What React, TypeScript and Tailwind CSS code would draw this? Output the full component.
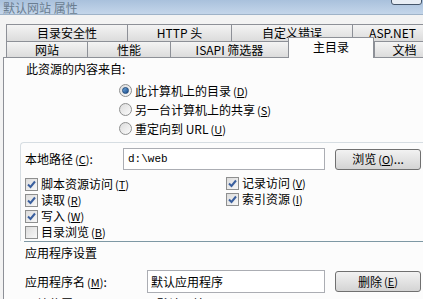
import React from "react";

function Key({ k }: { k: string }) {
  return (
    <span className="ml-[2px] text-[11px]">
      (<span className="underline">{k}</span>)
    </span>
  );
}

function Tab({ label, w }: { label: React.ReactNode; w: string }) {
  return (
    <div
      className={`${w} h-full shrink-0 flex items-center justify-center border-t border-l border-[#8d9097] bg-gradient-to-b from-[#f4f4f4] to-[#dcdcdc] text-[12px] leading-none`}
    >
      {label}
    </div>
  );
}

function Radio({ on, children }: { on?: boolean; children: React.ReactNode }) {
  return (
    <div className="h-[19px] flex items-center gap-[3px]">
      <div className="w-[13px] h-[13px] rounded-full border border-[#8e8f8f] bg-gradient-to-br from-[#dcdcdc] to-[#fbfbfb] flex items-center justify-center">
        {on && (
          <div className="w-[7px] h-[7px] rounded-full bg-gradient-to-br from-[#6fa8dc] to-[#1c4d8c] border border-[#1f4a7c]" />
        )}
      </div>
      <span className="text-[12px] leading-none">{children}</span>
    </div>
  );
}

function Check({ on, children }: { on?: boolean; children: React.ReactNode }) {
  return (
    <div className="h-[16px] flex items-center gap-[3px]">
      <div className="w-[13px] h-[13px] border border-[#8e8f8f] bg-gradient-to-br from-[#dcdcdc] to-[#f8f8f8] flex items-center justify-center">
        {on && (
          <svg width="9" height="9" viewBox="0 0 9 9">
            <path d="M1 4.5 L3.5 7 L8 1.5" fill="none" stroke="#3a5f9e" strokeWidth="2" />
          </svg>
        )}
      </div>
      <span className="text-[12px] leading-none">{children}</span>
    </div>
  );
}

function Btn({ children }: { children: React.ReactNode }) {
  return (
    <div className="w-[86px] h-[21px] shrink-0 rounded-[3px] border border-[#707070] bg-gradient-to-b from-[#f2f2f2] to-[#d4d4d4] flex items-center justify-center text-[12px] leading-none">
      {children}
    </div>
  );
}

export default function App() {
  return (
    <div className="relative w-[423px] h-[299px] overflow-hidden bg-[#f3f3f3] text-black font-['Noto_Sans_CJK_SC','Noto_Sans',sans-serif]">
      {/* title bar */}
      <div className="h-[15px] bg-gradient-to-b from-[#a9c1dc] to-[#c4d6ea] border-b border-[#9fb3c8] flex items-center pl-[3px]">
        <span className="text-[12px] leading-[13px] text-[#6a7d90]">默认网站 属性</span>
      </div>
      <div className="absolute left-[391px] top-[-5px] w-[31px] h-[10px] rounded-[3px] border border-[#44556a] bg-[#e8eef5]" />

      {/* tabs */}
      <div className="mt-[9px] pl-[6px]">
        <div className="flex h-[17px]">
          <Tab label="目录安全性" w="w-[121px]" />
          <Tab label="HTTP 头" w="w-[104px]" />
          <Tab label="自定义错误" w="w-[121px]" />
          <Tab label="ASP.NET" w="w-[80px]" />
        </div>
        <div className="flex items-end h-[16px]">
          <Tab label="网站" w="w-[81px]" />
          <Tab label="性能" w="w-[83px]" />
          <Tab label="ISAPI 筛选器" w="w-[118px]" />
          <div className="relative z-10 -mb-px w-[86px] h-[21px] shrink-0 border-t border-l border-r border-[#8d9097] bg-[#fcfcfc] flex items-center justify-center text-[12px] leading-none pb-[3px]">
            主目录
          </div>
          <Tab label="文档" w="w-[60px]" />
        </div>
      </div>

      {/* panel */}
      <div className="ml-[3px] h-[260px] border-t border-l border-[#8d9097] bg-[#fcfcfc]">
        <div className="pt-[4px] pl-[22px] text-[12px] leading-[14px]">此资源的内容来自:</div>
        <div className="mt-[5px] ml-[115px]">
          <Radio on>
            此计算机上的目录<Key k="D" />
          </Radio>
          <Radio>
            另一台计算机上的共享<Key k="S" />
          </Radio>
          <Radio>
            重定向到 URL<Key k="U" />
          </Radio>
        </div>

        <div className="mt-[4px] ml-[16px] border-t border-l border-[#d6dde2] rounded-tl-[4px] pl-[4px] pt-[5px] pb-[1px]">
          <div className="flex items-center h-[22px]">
            <span className="w-[98px] text-[12px] leading-none">
              本地路径<Key k="C" />:
            </span>
            <div className="w-[202px] h-[22px] border border-[#abadb3] bg-white flex items-center pl-[4px] text-[11px] font-['Liberation_Mono',monospace]">
              d:\web
            </div>
            <div className="ml-[10px]">
              <Btn>
                浏览<Key k="O" />...
              </Btn>
            </div>
          </div>
          <div className="mt-[6px] grid grid-cols-[201px_1fr]">
            <div>
              <Check on>
                脚本资源访问<Key k="T" />
              </Check>
              <Check on>
                读取<Key k="R" />
              </Check>
              <Check on>
                写入<Key k="W" />
              </Check>
              <Check>
                目录浏览<Key k="B" />
              </Check>
            </div>
            <div className="-mt-[1px]">
              <Check on>
                记录访问<Key k="V" />
              </Check>
              <Check on>
                索引资源<Key k="I" />
              </Check>
            </div>
          </div>
        </div>
        <div className="ml-[20px] h-px bg-[#7e98a4]" />

        <div className="mt-[4px] pl-[21px] text-[12px] leading-[14px]">应用程序设置</div>
        <div className="mt-[10px] pl-[21px] flex items-center h-[23px]">
          <span className="w-[122px] text-[12px] leading-none">
            应用程序名<Key k="M" />:
          </span>
          <div className="w-[178px] h-[23px] border border-[#abadb3] bg-white flex items-center pl-[3px] text-[12px]">
            默认应用程序
          </div>
          <div className="ml-[10px]">
            <Btn>
              删除<Key k="E" />
            </Btn>
          </div>
        </div>
        <div className="mt-[4px] pl-[21px] flex items-start h-[20px]">
          <span className="w-[122px] text-[12px] leading-[14px]">开始位置:</span>
          <span className="pl-[3px] text-[12px] leading-[14px]">&lt;默认网站&gt;</span>
        </div>
      </div>
    </div>
  );
}
